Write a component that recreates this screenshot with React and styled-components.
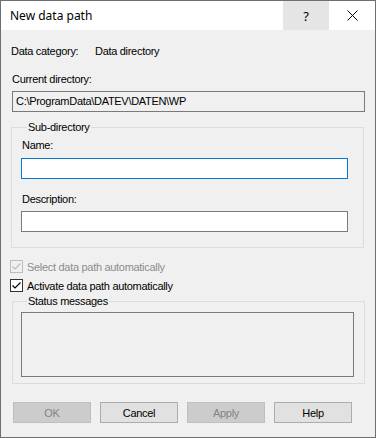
import React from "react";
import styled, {createGlobalStyle} from "styled-components";

const GlobalStyle = createGlobalStyle`
  html, body {
    margin: 0;
    padding: 0;
    background: #f0f0f0;
  }
  body {
    font-family: "Liberation Sans", Arial, sans-serif;
    font-size: 11px;
    letter-spacing: -0.3px;
    color: #000;
  }
`;

function CheckMark({color}) {
  return (
    <svg width="11" height="11" viewBox="0 0 11 11">
      <path d="M1.5 5.5 L4 8 L9.5 2.5" fill="none" stroke={color} strokeWidth="1.2"/>
    </svg>
  );
}

function CloseIcon() {
  return (
    <svg width="11" height="11" viewBox="0 0 11 11">
      <path d="M0.5 0.5 L10.5 10.5 M10.5 0.5 L0.5 10.5" stroke="#000" strokeWidth="1"/>
    </svg>
  );
}

function App() {
  return (
    <>
      <GlobalStyle/>
      <Window>
        <TitleBar>
          <Title>New data path</Title>
          <CaptionButton $hover>?</CaptionButton>
          <CaptionButton><CloseIcon/></CaptionButton>
        </TitleBar>
        <Body>
          <InfoRow>
            <InfoLabel>Data category:</InfoLabel>
            <span>Data directory</span>
          </InfoRow>
          <Label $mt={15} $ml={11}>Current directory:</Label>
          <ReadOnlyField>C:\ProgramData\DATEV\DATEN\WP</ReadOnlyField>

          <Group $mt={9} $ml={10} $pl={9} $pb={15}>
            <Legend>Sub-directory</Legend>
            <Label $mt={5} $ml={1}>Name:</Label>
            <Input $focused $mt={6}/>
            <Label $mt={14} $ml={1}>Description:</Label>
            <Input $mt={5}/>
          </Group>

          <CheckRow $mt={12} $disabled>
            <Box $disabled><CheckMark color="#bcbcbc"/></Box>
            Select data path automatically
          </CheckRow>
          <CheckRow $mt={6}>
            <Box><CheckMark color="#000"/></Box>
            Activate data path automatically
          </CheckRow>

          <Group $mt={3} $ml={11} $pl={8} $pb={6}>
            <Legend>Status messages</Legend>
            <MessageBox/>
          </Group>

          <ButtonBar>
            <Button disabled>OK</Button>
            <Button>Cancel</Button>
            <Button disabled>Apply</Button>
            <Button>Help</Button>
          </ButtonBar>
        </Body>
      </Window>
    </>
  );
}

const Window = styled.div`
  width: 376px;
  height: 438px;
  box-sizing: border-box;
  border: 1px solid #6f6f6f;
  background: #f0f0f0;
  display: flex;
  flex-direction: column;
`;

const TitleBar = styled.div`
  height: 29px;
  background: #fff;
  display: flex;
  align-items: stretch;
`;

const Title = styled.div`
  flex: 1;
  padding-left: 9px;
  display: flex;
  align-items: center;
  font-family: "Noto Sans", "Open Sans", sans-serif;
  font-size: 12px;
  letter-spacing: 0;
  color: #000;
`;

const CaptionButton = styled.div`
  width: 46px;
  display: flex;
  align-items: center;
  justify-content: center;
  font-family: "Noto Sans", sans-serif;
  font-size: 13px;
  background: ${p => (p.$hover ? "#e5e5e5" : "#fff")};
`;

const Body = styled.div`
  flex: 1;
  display: flex;
  flex-direction: column;
  padding-top: 15px;
`;

const InfoRow = styled.div`
  display: flex;
  line-height: 13px;
  padding-left: 10px;
`;

const InfoLabel = styled.span`
  width: 84px;
`;

const Label = styled.div`
  line-height: 13px;
  margin-top: ${p => p.$mt || 0}px;
  margin-left: ${p => p.$ml || 0}px;
`;

const ReadOnlyField = styled.div`
  margin: 5px 0 0 11px;
  width: 353px;
  height: 21px;
  box-sizing: border-box;
  border: 1px solid #7a7a7a;
  padding-left: 3px;
  line-height: 19px;
  background: #f0f0f0;
`;

const Group = styled.fieldset`
  margin: ${p => p.$mt}px 0 0 ${p => p.$ml}px;
  width: 353px;
  box-sizing: border-box;
  border: 1px solid #dcdcdc;
  padding: 0 0 ${p => p.$pb}px ${p => p.$pl}px;
  min-width: 0;
`;

const Legend = styled.legend`
  padding: 0 1px;
  margin-left: 6px;
  line-height: 13px;
  font-size: 11px;
`;

const Input = styled.div`
  margin-top: ${p => p.$mt}px;
  width: 327px;
  height: 21px;
  box-sizing: border-box;
  background: #fff;
  border: 1px solid ${p => (p.$focused ? "#0078d7" : "#7a7a7a")};
`;

const CheckRow = styled.div`
  display: flex;
  align-items: center;
  gap: 4px;
  margin-top: ${p => p.$mt}px;
  margin-left: 9px;
  height: 13px;
  color: ${p => (p.$disabled ? "#8d8d8d" : "#000")};
`;

const Box = styled.span`
  width: 13px;
  height: 13px;
  box-sizing: border-box;
  border: 1px solid ${p => (p.$disabled ? "#bcbcbc" : "#333")};
  background: ${p => (p.$disabled ? "#f0f0f0" : "#fff")};
  display: flex;
  align-items: center;
  justify-content: center;
`;

const MessageBox = styled.div`
  margin-top: 4px;
  width: 333px;
  height: 65px;
  box-sizing: border-box;
  border: 1px solid #7a7a7a;
  background: #f0f0f0;
`;

const ButtonBar = styled.div`
  display: flex;
  gap: 9px;
  margin: 18px 0 0 12px;
`;

const Button = styled.button`
  width: 78px;
  height: 21px;
  box-sizing: border-box;
  padding: 0;
  font-family: "Liberation Sans", Arial, sans-serif;
  font-size: 11px;
  letter-spacing: -0.3px;
  color: #000;
  background: #e1e1e1;
  border: 1px solid #adadad;
  border-radius: 0;

  &:disabled {
    color: #838383;
    background: #cccccc;
    border-color: #bfbfbf;
  }
`;

export default App;
